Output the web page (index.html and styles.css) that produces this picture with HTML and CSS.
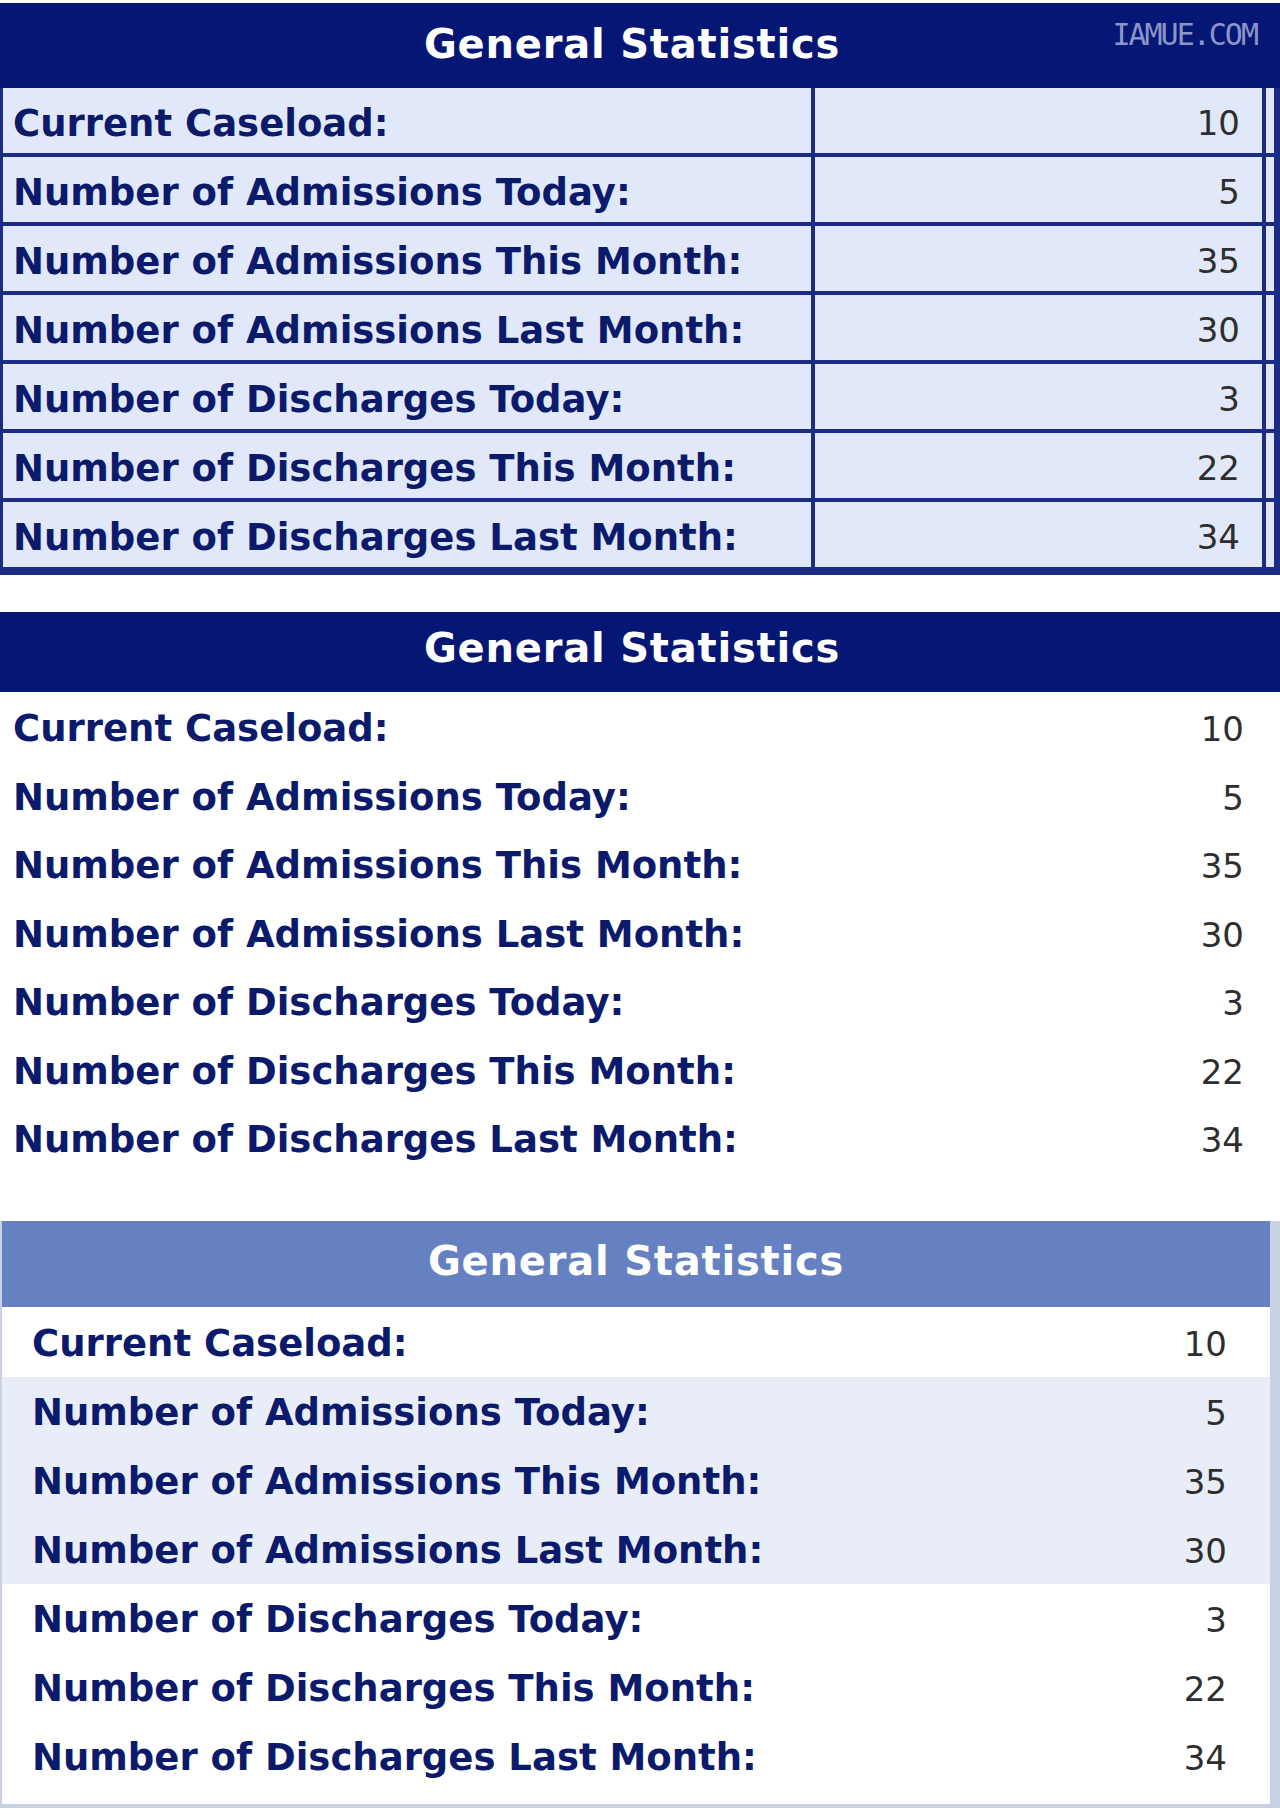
FILE: index.html
```html
<!DOCTYPE html>
<html lang="en">
<head>
<meta charset="utf-8">
<title>General Statistics</title>
<link rel="stylesheet" href="styles.css">
</head>
<body>
<div class="page">
  <section class="stats stats--boxed">
    <div class="stats__head">General Statistics</div>
    <span class="watermark">IAMUE.COM</span>
    <div class="stats__body">
      <div class="row"><div class="label">Current Caseload:</div><div class="value">10</div><div class="extra"></div></div>
      <div class="row"><div class="label">Number of Admissions Today:</div><div class="value">5</div><div class="extra"></div></div>
      <div class="row"><div class="label">Number of Admissions This Month:</div><div class="value">35</div><div class="extra"></div></div>
      <div class="row"><div class="label">Number of Admissions Last Month:</div><div class="value">30</div><div class="extra"></div></div>
      <div class="row"><div class="label">Number of Discharges Today:</div><div class="value">3</div><div class="extra"></div></div>
      <div class="row"><div class="label">Number of Discharges This Month:</div><div class="value">22</div><div class="extra"></div></div>
      <div class="row"><div class="label">Number of Discharges Last Month:</div><div class="value">34</div><div class="extra"></div></div>
    </div>
  </section>

  <section class="stats stats--plain">
    <div class="stats__head">General Statistics</div>
    <div class="stats__body">
      <div class="row"><div class="label">Current Caseload:</div><div class="value">10</div></div>
      <div class="row"><div class="label">Number of Admissions Today:</div><div class="value">5</div></div>
      <div class="row"><div class="label">Number of Admissions This Month:</div><div class="value">35</div></div>
      <div class="row"><div class="label">Number of Admissions Last Month:</div><div class="value">30</div></div>
      <div class="row"><div class="label">Number of Discharges Today:</div><div class="value">3</div></div>
      <div class="row"><div class="label">Number of Discharges This Month:</div><div class="value">22</div></div>
      <div class="row"><div class="label">Number of Discharges Last Month:</div><div class="value">34</div></div>
    </div>
  </section>

  <section class="stats stats--striped">
    <div class="stats__head">General Statistics</div>
    <div class="stats__body">
      <div class="row"><div class="label">Current Caseload:</div><div class="value">10</div></div>
      <div class="row row--shade"><div class="label">Number of Admissions Today:</div><div class="value">5</div></div>
      <div class="row row--shade"><div class="label">Number of Admissions This Month:</div><div class="value">35</div></div>
      <div class="row row--shade"><div class="label">Number of Admissions Last Month:</div><div class="value">30</div></div>
      <div class="row"><div class="label">Number of Discharges Today:</div><div class="value">3</div></div>
      <div class="row"><div class="label">Number of Discharges This Month:</div><div class="value">22</div></div>
      <div class="row"><div class="label">Number of Discharges Last Month:</div><div class="value">34</div></div>
    </div>
  </section>
</div>
</body>
</html>
```

FILE: styles.css
```css
html, body {
  margin: 0;
  padding: 0;
  background: #ffffff;
}

.page {
  width: 1280px;
  padding-top: 3px;
  font-family: "DejaVu Sans", Verdana, sans-serif;
}

.stats {
  position: relative;
}

.stats__head {
  color: #ffffff;
  font-weight: bold;
  font-size: 40px;
  letter-spacing: 0.8px;
  text-align: center;
}

.label {
  color: #0b1a6b;
  font-weight: bold;
  font-size: 37px;
  white-space: nowrap;
}

.value {
  color: #2e2e2e;
  font-size: 34px;
  text-align: right;
}

/* ---------- Table 1 : boxed ---------- */
.stats--boxed .stats__head {
  background: #061675;
  height: 85px;
  line-height: 82px;
  padding-right: 16px;
}

.watermark {
  position: absolute;
  top: 14px;
  right: 23px;
  font-family: "DejaVu Sans Mono", monospace;
  font-size: 30px;
  letter-spacing: -2px;
  color: #8b95c8;
}

.stats--boxed .stats__body {
  background: #1c2b84;
  display: flex;
  flex-direction: column;
  gap: 4px;
  padding: 0 0 8px 3px;
}

.stats--boxed .row {
  display: grid;
  grid-template-columns: 808px 447px 8px;
  grid-template-rows: 65px;
  column-gap: 4px;
  height: 65px;
}

.stats--boxed .label,
.stats--boxed .value,
.stats--boxed .extra {
  background: #e1e8f9;
  line-height: 71px;
  height: 65px;
}

.stats--boxed .label {
  padding-left: 10px;
}

.stats--boxed .value {
  padding-right: 22px;
}

/* ---------- Table 2 : plain ---------- */
.stats--plain {
  margin-top: 37px;
}

.stats--plain .stats__head {
  background: #061675;
  height: 80px;
  line-height: 72px;
  padding-right: 16px;
}

.stats--plain .stats__body {
  padding-top: 2px;
}

.stats--plain .row {
  display: flex;
  justify-content: space-between;
  height: 68.5px;
  line-height: 70px;
}

.stats--plain .label {
  padding-left: 13px;
}

.stats--plain .value {
  padding-right: 36px;
}

/* ---------- Table 3 : striped ---------- */
.stats--striped {
  margin-top: 47px;
  border-style: solid;
  border-color: #c9d1e5;
  border-width: 0 10px 4px 2px;
  padding-bottom: 13px;
}

.stats--striped .stats__head {
  background: #6681c1;
  height: 86px;
  line-height: 80px;
}

.stats--striped .stats__body {
  padding-top: 1px;
}

.stats--striped .row {
  display: flex;
  justify-content: space-between;
  height: 69px;
  line-height: 72px;
  background: #ffffff;
}

.stats--striped .row--shade {
  background: #e8edf7;
}

.stats--striped .label {
  padding-left: 30px;
}

.stats--striped .value {
  padding-right: 43px;
}
```
